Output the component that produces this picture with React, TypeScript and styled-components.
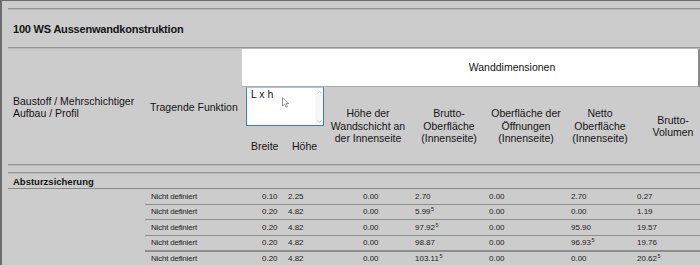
import styled, { createGlobalStyle } from "styled-components";

const GlobalStyle = createGlobalStyle`
  html, body {
    margin: 0;
    padding: 0;
    background: #cccccc;
    overflow: hidden;
  }
  body {
    font-family: "Liberation Sans", Arial, sans-serif;
    color: #141414;
  }
`;

const Frame = styled.div`
  width: 700px;
  height: 265px;
  box-sizing: border-box;
  border-left: 2px solid #6c6c6c;
  border-top: 1px solid #6c6c6c;
  padding: 7px 0 0 6px;
  overflow: hidden;
  background: #cccccc;
`;

const Rule = styled.div`
  height: 1px;
  background: #959595;
  border-bottom: 1px solid #b9b9b9;
`;

const Title = styled.div`
  height: 37px;
  display: flex;
  align-items: center;
  padding-left: 5px;
  font-size: 11px;
  font-weight: bold;
  letter-spacing: -0.2px;
`;

/* header: left labels, the white "Wanddimensionen" band, then the column captions */
const HeadGrid = styled.div`
  display: grid;
  grid-template-columns: 137px 97px 46px 42px 76px 86px 68px 80px 1fr;
  grid-template-rows: 38px 41px 36px;
  font-size: 10.5px;
  line-height: 12.5px;
`;

const SideLabel = styled.div<{ $col: number }>`
  grid-column: ${(p) => p.$col};
  grid-row: 1 / -1;
  display: flex;
  align-items: center;
  padding-left: 5px;
  line-height: 12px;
`;

const Band = styled.div`
  grid-column: 3 / -1;
  grid-row: 1;
  background: #ffffff;
  border-right: 2px solid #8a8a8a;
  border-bottom: 1px solid #a9a9a9;
  display: flex;
  align-items: center;
  justify-content: center;
  padding-left: 84px;
  padding-bottom: 1px;
`;

const BoxCell = styled.div`
  grid-column: 3 / 5;
  grid-row: 2;
  padding-left: 4px;
`;

const LengthBox = styled.div`
  position: relative;
  width: 78px;
  height: 39px;
  box-sizing: border-box;
  background: #ffffff;
  border: 1px solid #3f7cba;
  border-top-color: #b3c3d3;
  padding: 1px 0 0 4px;
  line-height: 11px;
`;

const ScrollStrip = styled.div`
  position: absolute;
  top: 0;
  right: 0;
  bottom: 0;
  width: 8px;
  display: flex;
  flex-direction: column;
  justify-content: space-between;
  align-items: center;
  padding: 3px 0 2px;
  box-sizing: border-box;
  background: #f7f7f7;
`;

const Pointer = styled.svg`
  position: absolute;
  left: 35px;
  top: 9px;
`;

const SubLabel = styled.div<{ $col: number; $pad: number }>`
  grid-column: ${(p) => p.$col};
  grid-row: 3;
  display: flex;
  align-items: center;
  padding-left: ${(p) => p.$pad}px;
`;

const ColHead = styled.div<{ $col: number; $shift?: number }>`
  grid-column: ${(p) => p.$col};
  grid-row: 2 / 4;
  display: flex;
  align-items: center;
  justify-content: center;
  text-align: center;
  white-space: nowrap;
  padding-left: ${(p) => p.$shift ?? 0}px;
  padding-top: 1px;
`;

const Gap = styled.div`
  height: 6px;
`;

const GroupRow = styled.div`
  height: 14px;
  display: flex;
  align-items: center;
  padding-left: 5px;
  font-size: 9.5px;
  font-weight: bold;
  border-bottom: 1px solid #8a8a8a;
`;

const DataRow = styled.div<{ $heavy?: boolean }>`
  display: grid;
  grid-template-columns: 111px 26px 75px 52px 74px 82px 66px 1fr;
  align-items: center;
  margin-left: 137px;
  padding-left: 6px;
  height: 15.5px;
  box-sizing: border-box;
  font-size: 8px;
  color: #222222;
  border-top: ${(p) => (p.$heavy ? "2px" : "1px")} solid #8e8e8e;
  &:first-child {
    border-top: none;
    height: 14.5px;
  }
`;

const Cell = styled.span<{ $tight?: boolean }>`
  white-space: nowrap;
  letter-spacing: ${(p) => (p.$tight ? "-0.2px" : "0")};
`;

const Sup = styled.sup`
  font-size: 5.5px;
  vertical-align: 3px;
  line-height: 0;
  margin-left: 0.5px;
`;

type Row = {
  breite: string;
  hoehe: string;
  wand: string;
  brutto: string;
  oeff: string;
  netto: string;
  volumen: string;
};

const rows: Row[] = [
  { breite: "0.10", hoehe: "2.25", wand: "0.00", brutto: "2.70", oeff: "0.00", netto: "2.70", volumen: "0.27" },
  { breite: "0.20", hoehe: "4.82", wand: "0.00", brutto: "5.99^5", oeff: "0.00", netto: "0.00", volumen: "1.19" },
  { breite: "0.20", hoehe: "4.82", wand: "0.00", brutto: "97.92^5", oeff: "0.00", netto: "95.90", volumen: "19.57" },
  { breite: "0.20", hoehe: "4.82", wand: "0.00", brutto: "98.87", oeff: "0.00", netto: "96.93^5", volumen: "19.76" },
  { breite: "0.20", hoehe: "4.82", wand: "0.00", brutto: "103.11^5", oeff: "0.00", netto: "0.00", volumen: "20.62^5" },
];

function Value({ v }: { v: string }) {
  const [num, exp] = v.split("^");
  return (
    <Cell>
      {num}
      {exp && <Sup>{exp}</Sup>}
    </Cell>
  );
}

function Chevron({ up }: { up?: boolean }) {
  return (
    <svg width="5" height="3" viewBox="0 0 5 3">
      <path
        d={up ? "M0.5 2.5 L2.5 0.5 L4.5 2.5" : "M0.5 0.5 L2.5 2.5 L4.5 0.5"}
        fill="none"
        stroke="#c4c4c4"
        strokeWidth="0.9"
      />
    </svg>
  );
}

export default function App() {
  return (
    <>
      <GlobalStyle />
      <Frame>
        <Rule />
        <Title>100 WS Aussenwandkonstruktion</Title>
        <Rule />
        <HeadGrid>
          <SideLabel $col={1}>
            Baustoff / Mehrschichtiger
            <br />
            Aufbau / Profil
          </SideLabel>
          <SideLabel $col={2}>Tragende Funktion</SideLabel>
          <Band>Wanddimensionen</Band>
          <BoxCell>
            <LengthBox>
              L x h
              <ScrollStrip>
                <Chevron up />
                <Chevron />
              </ScrollStrip>
              <Pointer width="8" height="11" viewBox="0 0 8 11">
                <path
                  d="M0.5 0.5 L0.5 9 L2.6 7.1 L4 10.2 L5.4 9.6 L4 6.6 L6.8 6.6 Z"
                  fill="#ffffff"
                  stroke="#7d7d7d"
                  strokeWidth="0.8"
                  strokeLinejoin="round"
                />
              </Pointer>
            </LengthBox>
          </BoxCell>
          <SubLabel $col={3} $pad={9}>
            Breite
          </SubLabel>
          <SubLabel $col={4} $pad={4}>
            Höhe
          </SubLabel>
          <ColHead $col={5}>
            Höhe der
            <br />
            Wandschicht an
            <br />
            der Innenseite
          </ColHead>
          <ColHead $col={6}>
            Brutto-
            <br />
            Oberfläche
            <br />
            (Innenseite)
          </ColHead>
          <ColHead $col={7}>
            Oberfläche der
            <br />
            Öffnungen
            <br />
            (Innenseite)
          </ColHead>
          <ColHead $col={8}>
            Netto
            <br />
            Oberfläche
            <br />
            (Innenseite)
          </ColHead>
          <ColHead $col={9} $shift={6}>
            Brutto-
            <br />
            Volumen
          </ColHead>
        </HeadGrid>
        <Rule />
        <Gap />
        <Rule />
        <GroupRow>Absturzsicherung</GroupRow>
        <div>
          {rows.map((r, i) => (
            <DataRow key={i} $heavy={i === 4}>
              <Cell $tight>Nicht definiert</Cell>
              <Value v={r.breite} />
              <Value v={r.hoehe} />
              <Value v={r.wand} />
              <Value v={r.brutto} />
              <Value v={r.oeff} />
              <Value v={r.netto} />
              <Value v={r.volumen} />
            </DataRow>
          ))}
        </div>
      </Frame>
    </>
  );
}
